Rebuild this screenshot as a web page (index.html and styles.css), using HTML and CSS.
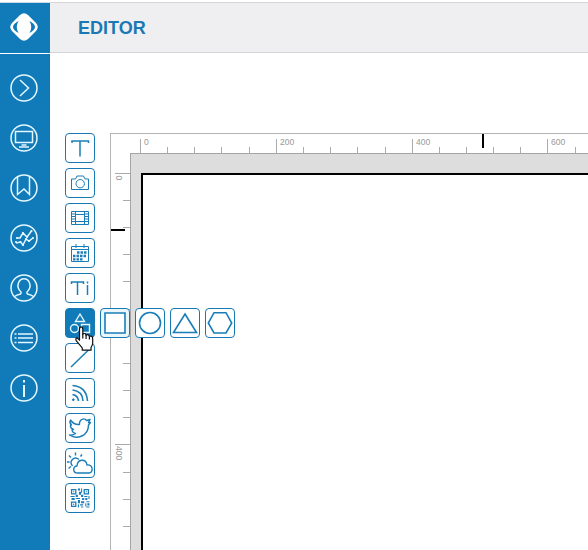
FILE: index.html
```html
<!DOCTYPE html>
<html lang="en">
<head>
<meta charset="utf-8">
<title>Editor</title>
<link rel="stylesheet" href="styles.css">
</head>
<body>
<div class="app">
  <nav class="sidebar">
    <a class="logo"><svg width="28" height="28" viewBox="-14 -14 28 28"><path class="fill" fill-rule="evenodd" d="M-4-12Q0-15.500 4-12L12-4Q15.500 0 12 4L4 12Q0 15.500-4 12L-12 4Q-15.500 0-12-4ZM-5.500-6Q-16.500 0-5.500 6Q-9 0-5.500-6ZM5.500-6Q16.500 0 5.500 6Q9 0 5.500-6Z"/></svg></a>
    <a class="item"><svg viewBox="-14 -14 28 28"><circle r="13"/><path d="M-4-8L4.500 0L-4 8"/></svg></a>
    <a class="item"><svg viewBox="-14 -14 28 28"><circle r="13"/><path d="M-8.500-6.500h17v11h-17ZM-2.500 7h5M-5 9h10"/></svg></a>
    <a class="item"><svg viewBox="-14 -14 28 28"><circle r="13"/><path d="M-6.500-11V6.500L0 1L5.500 6.500V-11.500"/></svg></a>
    <a class="item"><svg viewBox="-14 -14 28 28"><circle r="13"/><path d="M-7 0L-4 0L-1-5L3-1L7.500-7M-8 5L-3.500 4L-1 7L2 1L5 3L9 0"/><path class="dots" d="M-7 0h0M-1-5h0M3-1h0M7.500-7h0M-8 4h0M-3.500 4h0M-1 7h0M2 1h0M5 3h0M9 0h0"/></svg></a>
    <a class="item"><svg viewBox="-14 -14 28 28"><circle r="13"/><path d="M-9.500 8.500Q-7.500 7-3.500 6Q-2.500 5-3 4C-9-2-5-9.200 0-9.200S9-2 3 4Q2.500 5 3.500 6Q7.500 7 9.500 8.500"/></svg></a>
    <a class="item"><svg viewBox="-14 -14 28 28"><circle r="13"/><path class="list" d="M-9.500-4h2M-6-4H9M-9.500 0h2M-6 0H9M-9.500 4.500h2M-6 4.500H9"/></svg></a>
    <a class="item"><svg viewBox="-14 -14 28 28"><circle r="13"/><path class="info" d="M0-8v2.500M0-3V9"/></svg></a>
  </nav>
  <div class="main">
    <header class="header"><h1>EDITOR</h1></header>
    <div class="workspace">
      <div class="tools">
        <button class="tool"><svg viewBox="0 0 30 30"><path d="M7 10V8H23.500V10M15 8V23.500" class="bold"/></svg></button>
        <button class="tool"><svg viewBox="0 0 30 30"><path d="M6.500 11h4l1.500-3h6.500l1.500 3h3.500v10.500h-17Z"/><circle cx="15.200" cy="15.700" r="4.200"/></svg></button>
        <button class="tool"><svg viewBox="0 0 30 30"><path d="M6.500 8.500h17v13h-17ZM10.500 8.500v13M19.500 8.500v13M10.500 11.500h9M10.500 18.500h9"/><path d="M7 11h3.500M7 13.500h3.500M7 16h3.500M7 18.500h3.500M19.500 11H23M19.500 13.500H23M19.500 16H23M19.500 18.500H23"/></svg></button>
        <button class="tool"><svg viewBox="0 0 30 30"><path d="M6.500 8.500h17v15h-17ZM6.500 11.500h17M11 6v4M19 6v4"/><path class="dash" d="M12 14.500h10M8 18h13.500M8 21.300h10"/></svg></button>
        <button class="tool"><svg viewBox="0 0 30 30"><path class="bold" d="M6.500 11V9H18.500V11M12.500 9V22M22.500 12V22M22.500 8.500v2"/></svg></button>
        <button class="tool active"><svg viewBox="0 0 30 30"><path d="M15 6L19.500 13.500H10.500ZM16.500 16.500h8v8h-8Z"/><circle cx="9.500" cy="20.500" r="4"/></svg>
          <svg class="cursor" viewBox="0 0 20 24"><path d="M5 14V3.500Q5 1.500 6.500 1.500T8 3.500V8Q10.500 6.500 11 9Q13 7.500 14 10Q17 9 17 12.500V16Q17 18 15.500 20V22.500H7.500V20.500L2 14Q1 11.500 3 11.500L5 13.500Z"/><path d="M8 8v4M11 9v3.500M14 10v3"/></svg>
          <span class="shapes">
            <span class="tool hovered"><svg viewBox="0 0 30 30"><path d="M5 5h20v20H5Z"/></svg></span>
            <span class="tool"><svg viewBox="0 0 30 30"><circle cx="15" cy="15" r="10.500"/></svg></span>
            <span class="tool"><svg viewBox="0 0 30 30"><path d="M15 6L26.500 24.500H3.500Z"/></svg></span>
            <span class="tool"><svg viewBox="0 0 30 30"><path d="M9 4.700H21L26.700 15L21 25H9L3.300 15Z"/></svg></span>
          </span>
        </button>
        <button class="tool"><svg viewBox="0 0 30 30"><path class="bold" d="M6 24L24 6.500"/></svg></button>
        <button class="tool"><svg viewBox="0 0 30 30"><path class="heavy" d="M7.500 7.500Q21.500 8.500 22.500 23M7.500 12Q17.500 13 18 23M7.500 16.500Q13 17.500 13.500 23"/><circle class="solid" cx="8.300" cy="21.700" r="0.900"/></svg></button>
        <button class="tool"><svg viewBox="0 0 30 30"><path class="bird" d="M5.500 7Q9 12 14.500 11.500C14 6 19.500 4.500 21.500 7.500L25 6.500L23.500 9.500L25.500 9.500L23.500 12C23.500 23 12 27 4.500 22Q8 22.500 10.500 20.500Q7.500 20 7 17L8.500 16.500Q5 15 5.500 12L6.500 12Q4 9.500 5.500 7Z"/></svg></button>
        <button class="tool"><svg viewBox="0 0 30 30"><path class="bird" d="M12.500 25C7.500 25 7.500 18 12 18C12.500 10.500 21 10.500 22 17C28.500 16 28.500 25 24 25ZM7.500 18C3.500 13.500 9 7.500 14 11.500"/><path class="bird" d="M10.500 4.500v3M4 7.500l2 2M17 6.500l-1.500 2M2 14h2.500M3.500 20.500l2.500-2"/></svg></button>
        <button class="tool"><svg viewBox="4.600 4.600 20.800 20.800" class="qrcode"><path class="qr" d="M7 7h4v4H7ZM19 7h4v4h-4ZM7 19h4v4H7Z"/><path class="pix" d="M13 6h2v2h-2zM16 6h1v4h-1zM14 9h2v3h-2zM8.500 8.500h1v1h-1zM20.500 8.500h1v1h-1zM8.500 20.500h1v1h-1zM6 13h4v1H6zM11 12h2v2h-2zM7 15h3v2H7zM11 15h4v1h-4zM16 12h2v2h-2zM19 13h3v1h-3zM23 13h1v3h-1zM17 15h2v2h-2zM20 15h2v2h-2zM13 17h2v3h-2zM16 18h3v2h-3zM21 18h3v1h-3zM20 20h1v3h-1zM22 20h2v2h-2zM13 21h1v3h-1zM15 21h3v1h-3zM16 23h2v1h-2zM21 23h3v1h-3z"/></svg></button>
      </div>
      <div class="board">
        <svg class="ruler-top" viewBox="110 133 478 20">
          <path class="tick" d="M140.500 139v14M167.500 147v6M194.500 147v6M221.500 147v6M249.500 147v6M276.500 139v14M303.500 147v6M330.500 147v6M357.500 147v6M385.500 147v6M412.500 139v14M439.500 147v6M466.500 147v6M493.500 147v6M520.500 147v6M547.500 139v14M575.500 147v6"/>
          <path class="edge" d="M110 133.500H588M110.500 133v20"/>
          <path class="marker" d="M483 134v14"/>
          <text x="144" y="145">0</text><text x="280" y="145">200</text><text x="416" y="145">400</text><text x="551" y="145">600</text>
        </svg>
        <svg class="ruler-left" viewBox="110 153 20 397">
          <path class="tick" d="M115 173.500h15M123 200.500h7M123 227.500h7M123 254.500h7M123 281.500h7M115 309.500h15M123 336.500h7M123 363.500h7M123 390.500h7M123 417.500h7M115 444.500h15M123 472.500h7M123 499.500h7M123 526.500h7"/>
          <path class="edge" d="M110.500 153v397"/>
          <path class="marker" d="M111 230h14"/>
          <text transform="translate(116 175.500) rotate(90)">0</text><text transform="translate(116 311) rotate(90)">200</text><text transform="translate(116 446) rotate(90)">400</text>
        </svg>
        <div class="canvas"><div class="page"></div></div>
      </div>
    </div>
  </div>
</div>
</body>
</html>
```
FILE: styles.css
```css
* { box-sizing: border-box; }
body { margin: 0; background: #fff; font-family: "Liberation Sans", Arial, sans-serif; }
.app { display: flex; width: 588px; height: 550px; padding-top: 2px; overflow: hidden; }
svg { display: block; fill: none; }
.sidebar { width: 50px; height: 548px; flex: none; background: #117ab8; border-top: 1px solid #c9dce7; }
.logo { display: flex; height: 51px; padding: 10px 0 0 10px; border-bottom: 1px solid #fff; }
.logo .fill { fill: #fff; }
.item { display: flex; height: 50px; padding: 20px 0 0 10px; }
.item svg { width: 28px; height: 28px; stroke: #e4f8ff; stroke-width: 1.5; flex: none; }
.item .dots { stroke-width: 2.2; stroke-linecap: round; }
.item .list { stroke-width: 1.7; }
.item .info { stroke-width: 2; }
.main { flex: 1; min-width: 0; }
.header { height: 51px; background: #efeff2; border-top: 1px solid #d3d5d8; border-bottom: 1px solid #d3d5d8; padding-left: 28px; display: flex; align-items: center; }
h1 { margin: 0; font-size: 18px; line-height: 20px; font-weight: bold; color: #1b78b3; }
.workspace { display: flex; gap: 15px; padding: 80px 0 0 15px; }
.tools { display: flex; flex-direction: column; gap: 5px; width: 30px; flex: none; }
.tool { position: relative; display: block; width: 30px; height: 30px; padding: 0; border: 1px solid #1778b2; border-radius: 4px; background: #fff; flex: none; }
.tool > svg { width: 30px; height: 30px; margin: -1px; stroke: #1b7db8; stroke-width: 1; }
.tool .bold { stroke-width: 1.5; }
.tool .heavy { stroke-width: 1.6; }
.tool .bird { stroke-width: 1.4; stroke-linejoin: round; }
.tool .solid { fill: #1b7db8; }
.tool .dash { stroke-width: 2.3; stroke-dasharray: 2.5 1; }
.tool > .qrcode { width: 22px; height: 22px; margin: 3px; }
.tool .qr { stroke-width: 1.2; }
.tool .pix { fill: #1b7db8; stroke: none; }
.tool.active { background: #117ab8; z-index: 2; }
.tool.active > svg { stroke: #e4f8ff; stroke-width: 1.4; }
.tool.active > .cursor { position: absolute; left: 8px; top: 16px; width: 22px; height: 27px; margin: 0; z-index: 3; fill: #fff; stroke: #111; stroke-width: 1.1; }
.shapes { position: absolute; left: 34px; top: -1px; display: flex; gap: 5px; }
.shapes .tool > svg { stroke-width: 1.6; }
.shapes .hovered { background: #e9f7fc; }
.shapes .hovered path { fill: #fff; }
.board { display: grid; grid-template-columns: 20px 458px; grid-template-rows: 20px 397px; flex: none; }
.ruler-top { grid-column: 1 / 3; width: 478px; height: 20px; }
.ruler-left { width: 20px; height: 397px; }
.tick { stroke: #aaa; }
.edge { stroke: #b4b4b4; }
.marker { stroke: #000; stroke-width: 2; }
text { fill: #999; font-size: 8.5px; }
.canvas { background: #ddd; border: solid #a5a5a5; border-width: 1px 0 0 1px; padding: 19px 0 0 10px; }
.page { height: 377px; background: #fff; border: solid #000; border-width: 2px 0 0 2px; }
```
